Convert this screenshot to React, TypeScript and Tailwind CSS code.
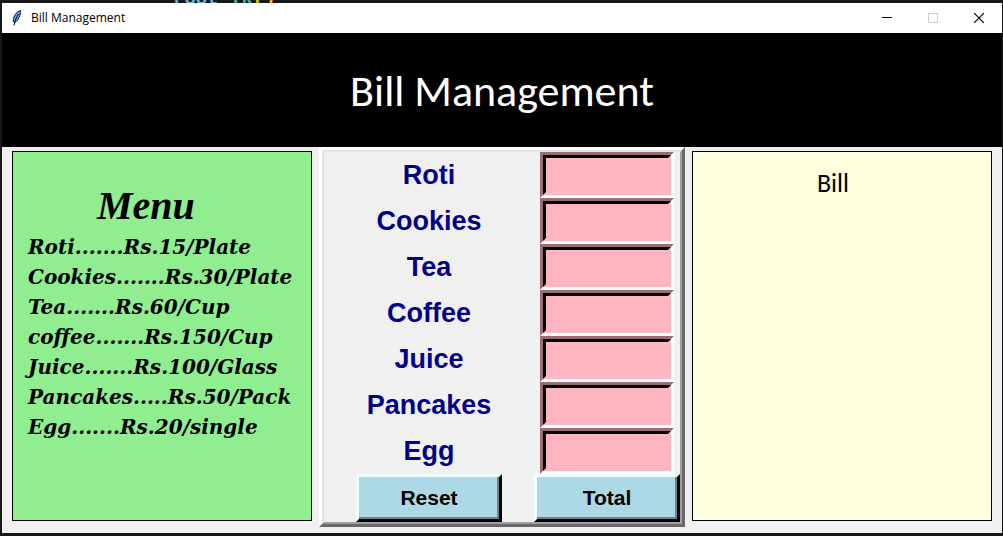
import { useState } from "react";

const MENU = [
  "Roti.......Rs.15/Plate",
  "Cookies.......Rs.30/Plate",
  "Tea.......Rs.60/Cup",
  "coffee.......Rs.150/Cup",
  "Juice.......Rs.100/Glass",
  "Pancakes.....Rs.50/Pack",
  "Egg.......Rs.20/single",
];

const PRICES: Record<string, number> = {
  Roti: 15,
  Cookies: 30,
  Tea: 60,
  Coffee: 150,
  Juice: 100,
  Pancakes: 50,
  Egg: 20,
};

const ITEMS = Object.keys(PRICES);

function Feather() {
  return (
    <svg width="12" height="18" viewBox="0 0 12 18" aria-hidden="true">
      <path d="M9.500 1.500C6 2.500 3 6 2.500 9.500L2.200 12.500L4 13.500C7.500 11 9.800 6.500 9.500 1.500Z" fill="#5b9be6" stroke="#222" strokeWidth="1" />
      <path d="M7.500 5C5.500 8 4 11.500 3 16.500" fill="none" stroke="#111" strokeWidth="1" />
    </svg>
  );
}

function TitleBar() {
  return (
    <header className="flex h-[30px] items-center bg-white">
      <div className="flex flex-1 items-center gap-2 pl-[9px]">
        <Feather />
        <span className="font-['Open_Sans',sans-serif] text-[12px] leading-4 text-black">Bill Management</span>
      </div>
      <button type="button" aria-label="Minimize" className="flex h-full w-[46px] items-center justify-center">
        <svg width="10" height="10" viewBox="0 0 10 10" shapeRendering="crispEdges">
          <path d="M0 4.500H10" stroke="#000" />
        </svg>
      </button>
      <button type="button" aria-label="Maximize" disabled className="flex h-full w-[46px] items-center justify-center">
        <svg width="10" height="10" viewBox="0 0 10 10" shapeRendering="crispEdges">
          <path d="M.5 .5H9.500V9.500H.5Z" fill="none" stroke="#ccc" />
        </svg>
      </button>
      <button type="button" aria-label="Close" className="flex h-full w-[46px] items-center justify-center">
        <svg width="10" height="10" viewBox="0 0 10 10">
          <path d="M0 0L10 10M10 0L0 10" stroke="#000" strokeWidth="1.200" />
        </svg>
      </button>
    </header>
  );
}

function RaisedButton({ label, onClick }: { label: string; onClick: () => void }) {
  return (
    <button
      type="button"
      onClick={onClick}
      className="h-12 w-[146px] border-[3px] border-t-[#f0ffff] border-r-black border-b-black border-l-[#f0ffff]"
    >
      <span className="flex h-full items-center justify-center border-r-2 border-b-2 border-[#68828a] bg-[#add8e6] pt-0.5 pl-0.5 text-[21px] leading-6 font-bold text-black">
        {label}
      </span>
    </button>
  );
}

export default function App() {
  const [counts, setCounts] = useState<Record<string, string>>({});
  const [total, setTotal] = useState<number | null>(null);

  const reset = () => {
    setCounts({});
    setTotal(null);
  };
  const sum = () => setTotal(ITEMS.reduce((acc, name) => acc + PRICES[name] * (Number(counts[name]) || 0), 0));

  return (
    <div className="flex min-h-screen flex-col bg-[#171717] pr-px pb-[3px] pl-0.5 font-['Liberation_Sans',sans-serif]">
      <div aria-hidden="true" className="flex h-[3px] items-end overflow-hidden pl-[171px]">
        <code className="font-['Liberation_Mono',monospace] text-[19px] leading-[8px] font-bold whitespace-pre text-[#6cb6dc]">
          root <span className="text-[#3fb8a0]">Tk</span>
          <span className="text-[#e8c51c]">()</span>
        </code>
      </div>
      <TitleBar />
      <div className="flex h-[114px] items-center justify-center bg-black pt-0.5">
        <h1 className="font-['Carlito','Lato',sans-serif] text-[44px] leading-[52px] text-white">Bill Management</h1>
      </div>
      <main className="grid flex-1 grid-cols-[300fr_366fr_300fr] items-start gap-[7px] bg-[#f0f0f0] px-2.5 pb-1.5">
        <section className="mt-1 h-[370px] border border-black bg-[#90ee90] pt-7 pl-[15px] text-black italic">
          <h2 className="pl-[69px] font-['Liberation_Serif',serif] text-[40px] leading-[52px] font-bold">Menu</h2>
          <ul className="font-['DejaVu_Serif',serif] text-[20px] leading-[30px] font-bold whitespace-nowrap">
            {MENU.map((line) => (
              <li key={line}>{line}</li>
            ))}
          </ul>
        </section>

        <section className="border-[3px] border-t-white border-r-[#696969] border-b-[#696969] border-l-white">
          <div className="border-2 border-t-[#e3e3e3] border-r-[#a0a0a0] border-b-[#a0a0a0] border-l-[#e3e3e3]">
            {ITEMS.map((name) => (
              <div key={name} className="grid h-[46px] grid-cols-[1fr_146px] items-center">
                <label htmlFor={name} className="text-center text-[27px] leading-8 font-bold text-[#00008b]">
                  {name}
                </label>
                <div className="mx-1.5 h-[46px] border-[3px] border-t-[#996d74] border-r-white border-b-white border-l-[#996d74]">
                  <input
                    id={name}
                    value={counts[name] ?? ""}
                    onChange={(e) => setCounts({ ...counts, [name]: e.target.value })}
                    className="block h-full w-full border-[3px] border-t-black border-r-[#ffb6c1] border-b-[#ffb6c1] border-l-black bg-[#ffb6c1] px-1 text-[20px] text-black outline-none"
                  />
                </div>
              </div>
            ))}
            <div className="grid grid-cols-[1fr_146px] justify-items-center">
              <RaisedButton label="Reset" onClick={reset} />
              <RaisedButton label="Total" onClick={sum} />
            </div>
          </div>
        </section>

        <section className="mt-1 h-[370px] border border-black bg-[#ffffe0] pt-[15px] pr-[18px] text-center font-['Carlito','Lato',sans-serif] text-black">
          <h2 className="text-[26px] leading-8">Bill</h2>
          {total !== null && <output className="text-[26px] leading-8">Rs.{total}</output>}
        </section>
      </main>
    </div>
  );
}
